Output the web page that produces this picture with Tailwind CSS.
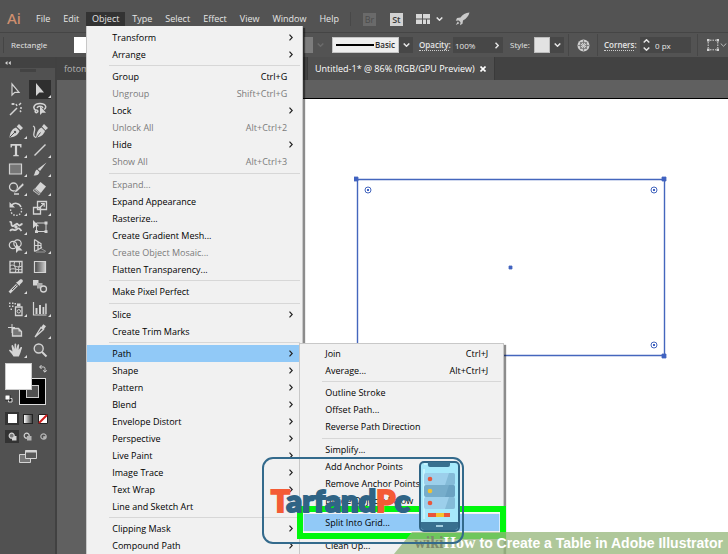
<!DOCTYPE html>
<html lang="en">
<head>
    <meta charset="UTF-8">
    <meta name="viewport" content="width=device-width, initial-scale=1.0">
    <title>Untitled-1 - Illustrator</title>
    <script src="https://cdn.jsdelivr.net/npm/@tailwindcss/browser@4"></script>
</head>
<body class="relative flex h-screen flex-col overflow-hidden bg-[#535353] font-['Open_Sans',sans-serif] text-[9px] text-[#e6e6e6]">

    <!-- Menu bar -->
    <header class="flex h-8 shrink-0 items-end pb-[6px] pl-[7px]">
        <span class="w-[23px] font-['Noto_Sans',sans-serif] text-[15px] leading-[16px] font-medium text-[#cf8f6f]">Ai</span>
        <nav class="flex h-[14px] gap-px leading-[14px]">
            <button type="button" class="px-[6px]">File</button>
            <button type="button" class="px-[6px]">Edit</button>
            <div class="relative">
                <button type="button" class="h-full w-[39px] bg-[#333333] text-center">Object</button>
                <ul id="objectMenu" class="absolute top-full left-0 z-10 w-[217px] border-r border-l border-[#c8c8c8] bg-[#f1f1f1] pt-[3px] pb-4 text-[#111111] shadow-[2px_2px_1px_rgba(0,0,0,0.45)]"></ul>
            </div>
            <button type="button" class="px-[6px]">Type</button>
            <button type="button" class="px-[6px]">Select</button>
            <button type="button" class="px-[6px]">Effect</button>
            <button type="button" class="px-[6px]">View</button>
            <button type="button" class="px-[6px]">Window</button>
            <button type="button" class="px-[6px]">Help</button>
        </nav>
        <div class="ml-[5px] flex h-[14px] items-center border-l border-[#484848] pl-3">
            <button type="button" class="h-[13px] w-[13px] bg-[#6a6a6a] text-[9px] leading-[13px] text-[#4c4c4c]">Br</button>
            <button type="button" class="ml-[14px] h-[13px] w-[13px] bg-[#d2d2d2] text-[9px] leading-[13px] font-semibold text-[#3c3c3c]">St</button>
            <button type="button" class="ml-[13px] flex items-center gap-[6px]" aria-label="Arrange documents">
                <svg class="h-[10px] w-[14px]" viewBox="0 0 14 10" fill="#d8d8d8"><path d="M0 0h6v4.500h-6zM0 5.500h6v4.500h-6zM7 0h7v4.500h-7zM7 5.500h3v4.500h-3zM11 5.500h3v4.500h-3z"/></svg>
                <svg class="h-[4px] w-[7px]" viewBox="0 0 7 4" fill="none" stroke="#e6e6e6" stroke-width="1.500"><path d="M.7.5l2.800 2.700L6.300.5"/></svg>
            </button>
            <button type="button" class="ml-3" aria-label="GPU performance">
                <svg class="h-[14px] w-[15px]" viewBox="0 0 15 14" fill="#c9c9c9"><path d="M14.500.5C10.500.8 7.500 2.500 5.500 5.500L2 6 .8 8.800l3-.3 1.700 1.700-.5 3 2.500-1.500.5-3.200C11.500 6.500 13.700 4 14.500.5z"/><path d="M2.800 9.500L.8 13l3.500-1.700z"/></svg>
            </button>
        </div>
    </header>

    <!-- Control bar -->
    <div class="flex h-[25px] shrink-0 items-center border-t border-[#454545] text-[8px]">
        <div class="flex w-[304px] items-center">
            <span class="ml-[3px] h-4 border-l border-[#454545]"></span>
            <span class="w-[70px] pl-[7px]">Rectangle</span>
            <button type="button" class="h-4 w-5 bg-white" aria-label="Fill"></button>
        </div>
        <span class="h-4 w-[9px] bg-[#7d7d7d]"></span>
        <svg class="ml-1 h-[4px] w-[7px]" viewBox="0 0 7 4" fill="none" stroke="#6b6b6b" stroke-width="1.500"><path d="M.7.5l2.800 2.700L6.300.5"/></svg>
        <button type="button" class="ml-2 flex h-4 w-[67px] items-center justify-between border border-[#c4c4c4] bg-[#eeeeee] px-[3px] font-semibold text-[#2b2b2b]">
            <span class="h-[2px] w-[38px] bg-black"></span>Basic
        </button>
        <button type="button" class="flex h-4 w-[14px] items-center justify-center bg-[#474747]" aria-label="Brush list">
            <svg class="h-[4px] w-[7px]" viewBox="0 0 7 4" fill="none" stroke="#e6e6e6" stroke-width="1.500"><path d="M.7.5l2.800 2.700L6.300.5"/></svg>
        </button>
        <label for="opacity" class="ml-[6px] w-[30px] border-b border-dotted border-[#cccccc] leading-[11px] font-semibold">Opacity:</label>
        <input id="opacity" type="text" value="100%" class="ml-1 h-4 w-[38px] bg-[#474747] pl-[2px]">
        <button type="button" class="flex h-4 w-3 items-center justify-center bg-[#474747]" aria-label="Opacity slider">
            <svg class="h-[7px] w-[4px]" viewBox="0 0 4 7" fill="none" stroke="#e6e6e6" stroke-width="1.500"><path d="M.5.7l2.700 2.800L.5 6.300"/></svg>
        </button>
        <span class="ml-[7px] w-6">Style:</span>
        <button type="button" class="h-4 w-4 border border-[#bcbcbc] bg-[#e2e2e2]" aria-label="Graphic style"></button>
        <button type="button" class="flex h-4 w-[14px] items-center justify-center bg-[#474747]" aria-label="Style list">
            <svg class="h-[4px] w-[7px]" viewBox="0 0 7 4" fill="none" stroke="#e6e6e6" stroke-width="1.500"><path d="M.7.5l2.800 2.700L6.300.5"/></svg>
        </button>
        <button type="button" class="ml-1 flex h-[22px] w-[30px] items-center justify-center border-r border-l border-[#474747]" aria-label="Recolor artwork">
            <svg class="h-[13px] w-[13px]" viewBox="0 0 13 13"><circle cx="6.500" cy="6.500" r="6" fill="#cfcfcf"/><path d="M6.500 1v11M1 6.500h11M2.700 2.700l7.600 7.600M10.300 2.700l-7.600 7.600" stroke="#777777" stroke-width=".8"/><circle cx="6.500" cy="6.500" r="3.500" fill="none" stroke="#666666" stroke-width=".8"/><circle cx="6.500" cy="6.500" r="1.500" fill="#cfcfcf"/></svg>
        </button>
        <label for="corners" class="ml-[6px] w-[30px] border-b border-dotted border-[#cccccc] leading-[11px] font-semibold">Corners:</label>
        <button type="button" class="ml-[6px] flex h-4 w-3 items-center justify-center bg-[#474747]" aria-label="Step corner radius">
            <svg class="h-3 w-[7px]" viewBox="0 0 7 12" fill="none" stroke="#e6e6e6" stroke-width="1.500"><path d="M.7 3.500L3.500.8l2.800 2.700M.7 8.500l2.800 2.700 2.800-2.700"/></svg>
        </button>
        <input id="corners" type="text" value="0 px" class="h-4 w-[39px] bg-[#474747] pl-[3px]">
        <button type="button" class="ml-[6px] flex h-[22px] items-center gap-px border-l border-[#474747] pl-[9px]" aria-label="Transform">
            <svg class="h-3 w-3" viewBox="0 0 12 12" fill="#d4d4d4"><path d="M0 0h2.500v2.500H0zM9.500 0H12v2.500H9.500zM0 9.500h2.500V12H0zM9.500 9.500H12V12H9.500z"/><path d="M3 1.200h6M3 10.800h6M1.200 3v6M10.800 3v6" stroke="#d4d4d4" stroke-dasharray="1.500 1"/></svg>
            <svg class="h-[4px] w-[7px]" viewBox="0 0 7 4" fill="none" stroke="#bbbbbb"><path d="M.7.5l2.800 2.700L6.300.5"/></svg>
        </button>
    </div>

    <div class="flex min-h-0 flex-1">
        <!-- Tools -->
        <aside class="w-[57px] shrink-0 border-r-2 border-[#414141] bg-[#515151]">
            <div class="flex h-[11px] items-center bg-[#424242] pl-[5px]">
                <svg class="h-[4px] w-[6px]" viewBox="0 0 6 4" fill="#d4d4d4"><path d="M2.500 0v4L0 2zM5.800 0v4L3.300 2z"/></svg>
            </div>
            <div class="mx-auto mt-px h-[3px] w-4 bg-[#434343]"></div>
            <div id="tools" class="mt-2 flex flex-col pl-[5px]"></div>

            <div class="relative mt-1 h-[42px]">
                <div class="absolute top-[15px] left-[19px] h-[27px] w-[27px] border border-[#dddddd] bg-black p-[6px]"><div class="h-full border border-[#cccccc] bg-[#515151]"></div></div>
                <div class="absolute top-0 left-[5px] h-[27px] w-[27px] border border-[#cccccc] bg-white"></div>
                <svg class="absolute top-[2px] left-[39px] h-2 w-2" viewBox="0 0 8 8" fill="none" stroke="#d4d4d4"><path d="M2.500 0L.7 2l1.800 2M.7 2h3.800a1.500 1.500 0 0 1 1.500 1.500V7M4 5.300L6 7.200l1.800-1.900"/></svg>
                <svg class="absolute top-[32px] left-[5px] h-2 w-2" viewBox="0 0 8 8"><path d="M3.500 3.500H7V7H3.500z" fill="#222222" stroke="#dddddd"/><path d="M0 0h5v5H0z" fill="#ffffff" stroke="#222222" stroke-width=".8"/></svg>
            </div>
            <div class="mt-[7px] flex gap-px pl-[5px]">
                <button type="button" class="flex h-[13px] w-[14px] items-center justify-center bg-[#333333]" aria-label="Color"><span class="h-[9px] w-[9px] bg-white"></span></button>
                <button type="button" class="flex h-[13px] w-[15px] items-center justify-center" aria-label="Gradient"><span class="h-[10px] w-[10px] border border-[#222222] bg-linear-to-r from-white to-[#444444]"></span></button>
                <button type="button" class="flex h-[13px] w-[14px] items-center justify-center" aria-label="None">
                    <svg class="h-[10px] w-[10px]" viewBox="0 0 10 10"><path d="M.5.5h9v9h-9z" fill="#ffffff" stroke="#222222"/><path d="M1 9l8-8" stroke="#d01c1c" stroke-width="2"/></svg>
                </button>
            </div>
            <div class="mt-[5px] flex gap-px pl-[5px]">
                <button type="button" class="flex h-[13px] w-[14px] items-center justify-center bg-[#333333]" aria-label="Draw normal">
                    <svg class="h-[9px] w-[9px]" viewBox="0 0 9 9"><path d="M4 4h4.500v4.500H4z" fill="#d4d4d4"/><circle cx="3.700" cy="3.700" r="2.500" fill="#777777" stroke="#d4d4d4" stroke-width="1.200"/></svg>
                </button>
                <button type="button" class="flex h-[13px] w-[15px] items-center justify-center" aria-label="Draw behind">
                    <svg class="h-[9px] w-[9px]" viewBox="0 0 9 9"><circle cx="3.700" cy="3.700" r="2.500" fill="none" stroke="#d4d4d4" stroke-width="1.200"/><path d="M4 4h4.500v4.500H4z" fill="#b4b4b4"/></svg>
                </button>
                <button type="button" class="flex h-[13px] w-[14px] items-center justify-center" aria-label="Draw inside">
                    <svg class="h-[9px] w-[9px]" viewBox="0 0 9 9"><circle cx="4.500" cy="4.500" r="2.700" fill="none" stroke="#b4b4b4" stroke-width="1.200"/><path d="M4.200 4.200h3v3h-3z" fill="#b4b4b4"/></svg>
                </button>
            </div>
            <button type="button" class="mt-[7px] ml-[19px] block" aria-label="Screen mode">
                <svg class="h-[13px] w-[18px]" viewBox="0 0 18 13" stroke="#d4d4d4"><path d="M.5 4.500h11v8H.5z" fill="#777777"/><path d="M6.500.5h11v8h-11z" fill="#5a5a5a"/><path d="M6.500 1.500h11" stroke-width="2"/></svg>
            </button>
        </aside>

        <!-- Documents -->
        <main class="flex min-w-0 flex-1 flex-col">
            <div class="flex h-[23px] shrink-0 bg-[#424242] leading-[23px]">
                <button type="button" class="w-[251px] border-r border-[#3a3a3a] pl-[7px] text-left font-medium text-[#b5b5b5]">fotomontaj.jpg</button>
                <div class="flex w-[187px] items-center justify-between border-r border-[#3a3a3a] bg-[#4f4f4f] pr-2 pl-[7px]">
                    <button type="button" class="font-medium text-white">Untitled-1* @ 86% (RGB/GPU Preview)</button>
                    <button type="button" aria-label="Close tab">
                        <svg class="h-[6px] w-[6px]" viewBox="0 0 6 6" stroke="#ffffff" stroke-width="1.600"><path d="M.5.5l5 5M5.500.5l-5 5"/></svg>
                    </button>
                </div>
            </div>
            <div class="flex min-h-0 flex-1 bg-[#606060] pt-[18px] pl-[200px]">
                <div class="flex-1 border-t border-l border-black bg-white">
                    <svg class="mt-[77px] ml-[96px] h-[183px] w-[314px]" viewBox="0 0 314 183" fill="none" stroke="#4466bd">
                        <path d="M3.500 3.500h307v176h-307z" stroke-width="1.400"/>
                        <path d="M0 1h4v4H0zM308 1h4v4h-4zM308 178h4v4h-4zM155 90h3v3h-3z" fill="#3f62c4" stroke-width=".8"/>
                        <circle cx="14" cy="14" r="3"/><circle cx="300" cy="14" r="3"/><circle cx="300" cy="169" r="3"/>
                        <path d="M13 13h2v2h-2zM299 13h2v2h-2zM299 168h2v2h-2z" fill="#3f62c4" stroke="none"/>
                    </svg>
                </div>
            </div>
        </main>
    </div>

    <!-- Caption strip -->
    <div class="absolute right-0 bottom-0 z-20 flex h-[22px] w-[334px] items-center justify-end bg-[#94b678]/75 pr-[5px] text-[14px] font-bold whitespace-nowrap text-white [clip-path:polygon(18px_0,100%_0,100%_100%,0_100%)]">
        <span class="font-['Liberation_Serif',serif] text-[16px] text-[#7c8a6c]">wiki</span><span class="font-['Liberation_Serif',serif] text-[16px]">How</span><span class="pl-1 font-['Liberation_Sans',sans-serif]">to Create a Table in Adobe Illustrator</span>
    </div>

    <!-- Site badge -->
    <div class="absolute bottom-[10px] left-[262px] z-30 flex h-[87px] w-[202px] items-center justify-between rounded-[11px] border-2 border-[#336a8c] pr-[2px] pl-[7px]">
        <span class="font-['Lato',sans-serif] text-[31px] leading-[31px] font-black text-[#2f6485] [-webkit-text-stroke:2px_currentColor]"><span class="text-[#f45b35]">T</span>arfand<span class="text-[#f45b35]">P</span>c</span>
        <svg class="mb-2 h-[71px] w-[41px] shrink-0" viewBox="0 0 41 71">
            <rect x="1" y="1" width="39" height="69" rx="4" fill="#a6e9fb" stroke="#2f6485" stroke-width="2"/>
            <path d="M2 61h37v5a3 3 0 0 1-3 3H5a3 3 0 0 1-3-3z" fill="#38708f"/>
            <path d="M9 1h22v3a2 2 0 0 1-2 2H11a2 2 0 0 1-2-2z" fill="#38708f"/>
            <path d="M5 3h3M5 8v50" stroke="#d2f8ff" stroke-width="1.500"/>
            <rect x="5" y="12" width="31" height="12" rx="2" fill="#9ccfeb"/><path d="M30 12h4a2 2 0 0 1 2 2v8a2 2 0 0 1-2 2h-8z" fill="#84bbd8"/>
            <rect x="5" y="24" width="31" height="12" rx="2" fill="#76adcb"/><path d="M30 24h4a2 2 0 0 1 2 2v8a2 2 0 0 1-2 2h-8z" fill="#6aa2c2"/>
            <rect x="5" y="36" width="31" height="12" rx="2" fill="#9ccfeb"/><path d="M30 36h4a2 2 0 0 1 2 2v8a2 2 0 0 1-2 2h-8z" fill="#84bbd8"/>
            <circle cx="11" cy="18" r="2.300" fill="#e8563c"/><circle cx="11" cy="30" r="2.300" fill="#f1c232"/><circle cx="11" cy="42" r="2.300" fill="#e8563c"/>
            <path d="M9 52h22v4H9z" fill="#e8563c"/><path d="M17 52h8v4h-8z" fill="#f7c32e"/>
            <path d="M17 65h7" stroke="#c4ecf8" stroke-width="1.500"/>
        </svg>
    </div>

    <script>
        // A number is a separator of that height, in pixels
        const objectItems = [
            { label: 'Transform', more: true },
            { label: 'Arrange', more: true },
            5,
            { label: 'Group', keys: 'Ctrl+G' },
            { label: 'Ungroup', keys: 'Shift+Ctrl+G', disabled: true },
            { label: 'Lock', more: true },
            { label: 'Unlock All', keys: 'Alt+Ctrl+2', disabled: true },
            { label: 'Hide', more: true },
            { label: 'Show All', keys: 'Alt+Ctrl+3', disabled: true },
            6,
            { label: 'Expand...', disabled: true },
            { label: 'Expand Appearance' },
            { label: 'Rasterize...' },
            { label: 'Create Gradient Mesh...' },
            { label: 'Create Object Mosaic...', disabled: true },
            { label: 'Flatten Transparency...' },
            5,
            { label: 'Make Pixel Perfect' },
            6,
            { label: 'Slice', more: true },
            { label: 'Create Trim Marks' },
            5,
            { label: 'Path', more: true, id: 'pathItem', active: true },
            { label: 'Shape', more: true },
            { label: 'Pattern', more: true },
            { label: 'Blend', more: true },
            { label: 'Envelope Distort', more: true },
            { label: 'Perspective', more: true },
            { label: 'Live Paint', more: true },
            { label: 'Image Trace', more: true },
            { label: 'Text Wrap', more: true },
            { label: 'Line and Sketch Art' },
            5,
            { label: 'Clipping Mask', more: true },
            { label: 'Compound Path', more: true },
        ];

        const pathItems = [
            { label: 'Join', keys: 'Ctrl+J' },
            { label: 'Average...', keys: 'Alt+Ctrl+J' },
            5,
            { label: 'Outline Stroke' },
            { label: 'Offset Path...' },
            { label: 'Reverse Path Direction' },
            6,
            { label: 'Simplify...' },
            { label: 'Add Anchor Points' },
            { label: 'Remove Anchor Points' },
            { label: 'Divide Objects Below' },
            5,
            { label: 'Split Into Grid...', active: true, framed: true },
            6,
            { label: 'Clean Up...' },
        ];

        const arrow = '<svg class="h-[7px] w-[4px]" viewBox="0 0 4 7" fill="none" stroke="#222222" stroke-width="1.200"><path d="M.5.7l2.700 2.800L.5 6.300"/></svg>';

        function menuRow(item) {
            if (item === 5) return '<li class="mr-[2px] ml-[22px] flex h-[5px] items-center"><hr class="w-full border-[#d7d7d7]"></li>';
            if (item === 6) return '<li class="mr-[2px] ml-[22px] flex h-[6px] items-center"><hr class="w-full border-[#d7d7d7]"></li>';
            const tone = item.disabled ? 'text-[#7b7b7b]' : 'font-medium text-black';
            const fill = item.active ? 'bg-[#91c9f7]' : '';
            return `<li ${item.id ? `id="${item.id}"` : ''} class="relative ${fill}">
                <button type="button" ${item.disabled ? 'disabled' : ''} class="flex h-[17px] w-full items-center justify-between pl-[25px] leading-[17px] ${item.more ? 'pr-[9px]' : 'pr-[15px]'} ${tone}">
                    <span>${item.label}</span>${item.more ? arrow : `<span>${item.keys || ''}</span>`}
                </button>
                ${item.framed ? '<div class="absolute -inset-x-[3px] -inset-y-2 border-[6px] border-[#00f70c] ring-1 ring-white/60 ring-inset"></div>' : ''}
            </li>`;
        }

        document.getElementById('objectMenu').innerHTML = objectItems.map(menuRow).join('');
        document.getElementById('pathItem').insertAdjacentHTML('beforeend',
            `<ul class="absolute -top-[2px] left-[212px] w-[205px] border border-[#c8c8c8] bg-[#f1f1f1] pt-px pb-4 shadow-[2px_2px_1px_rgba(0,0,0,0.45)]">${pathItems.map(menuRow).join('')}</ul>`);

        // Icons on a 16 x 16 grid, two per row
        const toolGroups = [
            { gap: 'mt-0', tools: [
                ['Selection', '<path d="M4 2v11l2.800-2.700h4.200z" fill="#444444" stroke="#d4d4d4" stroke-width="1.200"/>'],
                ['Direct Selection', '<path d="M4 1v13l3.400-3.400H12z"/>', true],
                ['Magic Wand', '<path d="M2 14l7-7M8 3l1 2M13 2l-2 2M14 7h-2M5 2v2M3.500 3h3M12 9.500l1 1.500" stroke="#d4d4d4" stroke-width="1.500"/>'],
                ['Lasso', '<path d="M4 9.500C0 7 2 2.500 8 2.500s7 4 4 6M4 9.500c-2 1 0 3 1.500 1.500S3.500 8 3 9.500M5 7c1-2.500 5-2.500 6 0" fill="none" stroke="#d4d4d4" stroke-width="1.500"/><path d="M8 5v9l2.300-2.300H14z"/>'],
            ] },
            { gap: 'mt-[3px]', tools: [
                ['Pen', '<path d="M1.500 14.500C2 10 3.500 6 8 4.500L11.500 8C10 12.500 6 14 1.500 14.500z"/><path d="M8.700 3.500L11 1l4 4-2.500 2.300z"/><path d="M2 14l4.500-4.500" stroke="#515151"/><circle cx="7" cy="9" r="1.200" fill="#515151"/>', true],
                ['Curvature', '<path d="M4 14.500C4.500 10 6 6 9.500 4.500L13 8c-1.500 4.500-5 6-9 6.500z"/><path d="M10 3.500L12 1l4 4-2.500 2.300z"/><path d="M5 14l3.500-4.500" stroke="#515151"/><path d="M1 3c3 1 1.500 5 1 7s0 4 2 4.500" fill="none" stroke="#d4d4d4" stroke-width="1.300"/>'],
                ['Type', '<path d="M2.500 2h11v3.500h-1.200L11.800 3.700H9.100v9l1.700.5v1H5.200v-1l1.700-.5v-9H4.200l-.5 1.800H2.500z"/>', true],
                ['Line Segment', '<path d="M2.500 13.500l11-11" stroke="#d4d4d4" stroke-width="1.400"/>', true],
                ['Rectangle', '<path d="M1.500 3h12v10h-12z" fill="#777777" stroke="#d4d4d4" stroke-width="1.200"/>', true],
                ['Paintbrush', '<path d="M14.500 1.500L8 10 5.800 8z"/><path d="M5 8.500L7.500 11c-.5 3-3.500 4-6 3.300C3.300 13 2.500 9.500 5 8.500z"/>', true],
                ['Shaper', '<circle cx="5.500" cy="7" r="4" fill="none" stroke="#d4d4d4" stroke-width="1.300"/><path d="M14.800 3L7.500 10.200 5.500 13l3.300-1.200L16 5z" stroke="#515151" stroke-width=".4"/><path d="M6 14h5" stroke="#d4d4d4" stroke-width="1.500"/>', true],
                ['Eraser', '<path d="M8.500 2L14 6.500 8.800 13 3 8.500z"/><path d="M2.700 9l5.500 4.500-1.400 1.300L1 10.500z" fill="#777777" stroke="#d4d4d4" stroke-width=".8"/>', true],
            ] },
            { gap: 'mt-px', tools: [
                ['Rotate', '<path d="M3.500 5.500A5.500 5.500 0 0 1 13 7" fill="none" stroke="#d4d4d4" stroke-width="1.500"/><path d="M13.300 8A5.500 5.500 0 1 1 3 8" fill="none" stroke="#d4d4d4" stroke-width="1.400" stroke-dasharray="1.500 1.500"/><path d="M1.500 2v5.500H7z"/>', true],
                ['Scale', '<path d="M5.500 1.500h9v8h-9zM1.500 7.500h7v6.500h-7z" fill="none" stroke="#d4d4d4" stroke-width="1.300"/><path d="M7 8.500l5-5M9 3.500h3.200v3.200" fill="none" stroke="#d4d4d4" stroke-width="1.200"/>', true],
                ['Width', '<path d="M1.500 3C5 2 2 6.500 4.500 7S8 3 10 5.500 12 5 14.500 5M2 12c2.500-4 4.500 1 6.500-1.500S12 10 13.500 12" fill="none" stroke="#d4d4d4" stroke-width="1.800"/><circle cx="8" cy="8" r="1.700"/>', true],
                ['Free Transform', '<path d="M4.500 4h9.500v8.500H4.500z" fill="none" stroke="#d4d4d4"/><path d="M3 11.200h3V14H3zM12.500 11.200h3V14h-3zM12.500 2.500h3v3h-3z"/><path d="M1 1v8.500l2.300-2.200h3.900z"/>'],
                ['Shape Builder', '<circle cx="5" cy="7" r="3.700" fill="none" stroke="#d4d4d4" stroke-width="1.200"/><circle cx="9.500" cy="5.500" r="3.700" fill="none" stroke="#d4d4d4" stroke-width="1.200"/><path d="M8 5.500V15l2.500-2.400h4z"/>', true],
                ['Perspective Grid', '<path d="M2.500 1.500v12M6 3.500v9M9 5.500v5M2.500 1.500l7 4.500M2.500 7.500h7M2.500 13.500L10 9.500" fill="none" stroke="#d4d4d4" stroke-width="1.200"/><path d="M4 14h9M9 10.500l5 3" stroke="#999999"/>', true],
            ] },
            { gap: 'mt-[2px]', tools: [
                ['Mesh', '<path d="M2 2.500h12v11H2z" fill="none" stroke="#d4d4d4" stroke-width="1.300"/><path d="M2 7c4-3 5 3 12 0M7 2.500c-3 4 3 7 0 11M11 2.500c2 4-2 7 0 11M2 10.500c4-2 7 1 12 0" fill="none" stroke="#d4d4d4"/>'],
                ['Gradient', '<defs><linearGradient id="toolGradient"><stop stop-color="#444444"/><stop offset="1" stop-color="#cccccc"/></linearGradient></defs><path d="M2.500 2.500h11v11h-11z" fill="url(#toolGradient)" stroke="#d4d4d4" stroke-width="1.200"/>'],
                ['Eyedropper', '<path d="M9 7l-6 6-1.500 1.500" stroke="#d4d4d4" stroke-width="2.600"/><path d="M8.700 7.300L4 12" stroke="#515151"/><path d="M8 4.500l1.500-.7L12 1.500c2-1.200 3.700.8 2.500 2.500L12 6.500 11.500 8z"/>', true],
                ['Blend', '<path d="M1 2h5.500v5.500H1z"/><path d="M5 5h5.500v5.500H5z" fill="#aaaaaa"/><circle cx="11.500" cy="11" r="3" fill="#515151" stroke="#d4d4d4" stroke-width="1.300"/>'],
            ] },
            { gap: 'mt-1', tools: [
                ['Symbol Sprayer', '<path d="M7.500 6h6.500v8.500H7.500z" fill="none" stroke="#d4d4d4" stroke-width="1.300"/><path d="M9 2.500h3.500V5H9zM1 1.500h1.500V3H1zM4 1.500h1.500V3H4zM6.500 2h1.500v1.500H6.500zM1 4.500h1.500V6H1zM4 4.500h1.500V6H4zM2.500 7.500H4V9H2.500z"/><circle cx="10.800" cy="10.300" r="1.700" fill="none" stroke="#d4d4d4"/>', true],
                ['Column Graph', '<path d="M1.500 1v13h13" fill="none" stroke="#d4d4d4" stroke-width="1.200"/><path d="M3.500 7h2v6h-2zM7 4h2v9H7zM10.500 6h1.800v7h-1.800zM13.200 2.500h1.500V13h-1.500z"/>', true],
            ] },
            { gap: 'mt-[3px]', tools: [
                ['Artboard', '<path d="M4 1v9M0 4.500h7" stroke="#d4d4d4"/><path d="M4.500 5.500h6l3 3V13h-9z" fill="#777777" stroke="#d4d4d4" stroke-width="1.300"/><path d="M10.500 5.500v3h3z"/>'],
                ['Slice', '<path d="M3 14l6-9.500 2.500 2z" fill="none" stroke="#d4d4d4" stroke-width="1.300"/><path d="M9 4.500l2.300-3.200 2.700 2-2.300 3.200z"/>', true],
                ['Hand', '<path d="M5.500 14.500C4 12 2.500 10.500 1 8.500 1 7.300 2.500 7.500 4.500 9.500L3.500 4C3.500 2.800 5 2.800 5.300 4L6.500 7V2.300c0-1.200 1.700-1.200 1.700 0V7l1.300-4c.4-1.200 1.800-.8 1.600.4L10.700 8l1.800-2.700c.8-.8 1.900-.2 1.500.8-1.200 3-1.200 5-3.200 8.400z"/>', true],
                ['Zoom', '<circle cx="6.700" cy="6.500" r="4.500" fill="#606060" stroke="#d4d4d4" stroke-width="1.400"/><path d="M10 10l4.500 4.500" stroke="#d4d4d4" stroke-width="2"/>'],
            ] },
        ];

        document.getElementById('tools').innerHTML = toolGroups.map(group => `
            <div class="grid grid-cols-[24px_24px] ${group.gap}">
                ${group.tools.map(([name, shape, flyout]) => `
                    <button type="button" aria-label="${name}" class="relative flex h-[19px] w-[22px] items-center justify-center ${name === 'Direct Selection' ? 'bg-[#2f2f2f]' : ''}">
                        <svg class="h-4 w-4" viewBox="0 0 16 16" fill="#d4d4d4">${shape}</svg>
                        ${flyout ? '<svg class="absolute right-0 bottom-px h-[3px] w-[3px]" viewBox="0 0 3 3" fill="#dddddd"><path d="M3 0v3H0z"/></svg>' : ''}
                    </button>`).join('')}
            </div>`).join('');
    </script>
</body>
</html>
